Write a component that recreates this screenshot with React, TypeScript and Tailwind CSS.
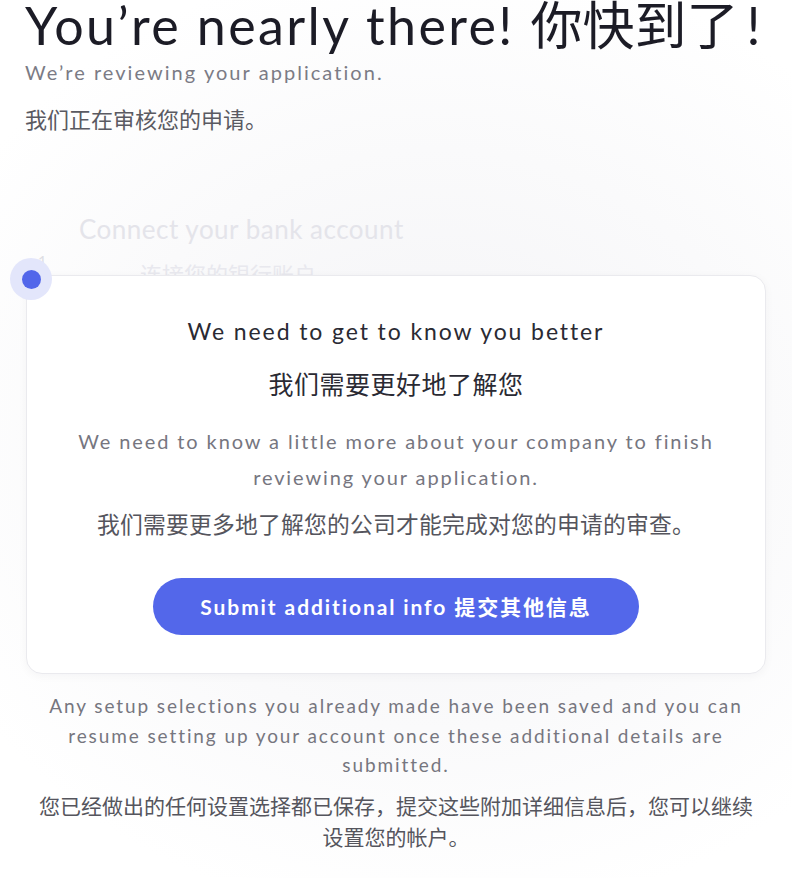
const LATIN = "font-['Lato','Noto_Sans_CJK_SC',sans-serif]"

function StepDot() {
  return (
    <div className="absolute left-[10px] top-[258px] z-20 flex h-[42px] w-[42px] items-center justify-center rounded-full bg-[#e3e6fb]">
      <div className="h-[19px] w-[19px] rounded-full bg-[#5266ea]" />
    </div>
  )
}

export default function App() {
  return (
    <div
      className={`relative min-h-[878px] overflow-hidden bg-[radial-gradient(ellipse_70%_55%_at_55%_50%,#f3f3f6_0%,#fafafb_60%,#ffffff_100%)] ${LATIN}`}
    >
      <div className="px-[25px]">
        <h1 className="whitespace-nowrap text-[52px] leading-[50px] tracking-[2.4px] text-[#1c1c26]">
          You’re nearly there! <span className="tracking-normal">你快到了</span>
          <span className="ml-[8px]">!</span>
        </h1>
        <p className="mt-[8px] text-[20px] leading-[28px] tracking-[2.05px] text-[#7b7b85]">We’re reviewing your application.</p>
        <p className="mt-[19px] text-[22px] leading-[30px] text-[#5a5a62]">我们正在审核您的申请。</p>
      </div>

      <div className="mt-[78px] pl-[79px]">
        <div className="text-[26px] leading-[32px] tracking-[0.5px] text-[#e4e4ea]">Connect your bank account</div>
        <div className="mt-[16px] pl-[61px] text-[22px] leading-[28px] text-[#e8e8ee]">连接您的银行账户</div>
      </div>
      <div className="absolute left-[38px] top-[250px] text-[15px] text-[#dedee4]">1</div>

      <div className="relative z-10 mx-[26px] mt-[-14px] rounded-[16px] border border-[#eaeaee] bg-white px-[30px] pb-[38px] pt-[38px] text-center shadow-[0_2px_10px_rgba(30,30,60,0.04)]">
        <h2 className="text-[23px] leading-[34px] tracking-[1.9px] text-[#2a2a33]">We need to get to know you better</h2>
        <p className="mt-[19px] text-[25px] leading-[34px] tracking-[0.5px] text-[#2a2a33]">我们需要更好地了解您</p>
        <p className="mx-auto mt-[22px] max-w-[670px] text-[20px] leading-[36px] tracking-[1.9px] text-[#76767f]">
          We need to know a little more about your company to finish reviewing your application.
        </p>
        <p className="mt-[13px] text-[22.8px] leading-[32px] tracking-[0.2px] text-[#55555d]">
          我们需要更多地了解您的公司才能完成对您的申请的审查。
        </p>
        <button className="mx-auto mt-[38px] flex h-[57px] w-[486px] items-center justify-center rounded-full bg-[#5367ea] text-[21px] font-bold tracking-[1.9px] text-white">
          Submit additional info 提交其他信息
        </button>
      </div>
      <StepDot />

      <div className="mx-auto mt-[17px] w-[724px] text-center">
        <p className="text-[19px] leading-[29.5px] tracking-[1.9px] text-[#76767f]">
          Any setup selections you already made have been saved and you can resume setting up your account once these
          additional details are submitted.
        </p>
        <p className="mt-[10px] text-[21px] leading-[31px] text-[#55555d]">
          您已经做出的任何设置选择都已保存，提交这些附加详细信息后，您可以继续设置您的帐户。
        </p>
      </div>
    </div>
  )
}
